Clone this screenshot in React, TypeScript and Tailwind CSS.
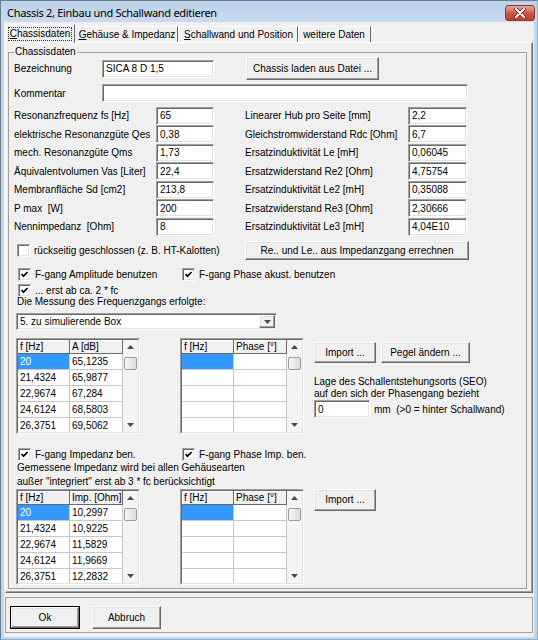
import React from "react";

const sunken =
  "bg-white border border-[#a0a0a0] border-r-white border-b-white shadow-[inset_1px_1px_0_#696969,inset_-1px_-1px_0_#e3e3e3]";
const raised =
  "bg-[#f0f0f0] border border-white border-r-[#696969] border-b-[#696969] shadow-[inset_-1px_-1px_0_#a0a0a0,inset_1px_1px_0_#e3e3e3]";

const leftParams: [string, string][] = [
  ["Resonanzfrequenz fs [Hz]", "65"],
  ["elektrische Resonanzgüte Qes", "0,38"],
  ["mech. Resonanzgüte Qms", "1,73"],
  ["Äquivalentvolumen Vas [Liter]", "22,4"],
  ["Membranfläche Sd [cm2]", "213,8"],
  ["P max  [W]", "200"],
  ["Nennimpedanz  [Ohm]", "8"],
];

const rightParams: [string, string][] = [
  ["Linearer Hub pro Seite [mm]", "2,2"],
  ["Gleichstromwiderstand Rdc [Ohm]", "6,7"],
  ["Ersatzinduktivität Le [mH]", "0,06045"],
  ["Ersatzwiderstand Re2 [Ohm]", "4,75754"],
  ["Ersatzinduktivität Le2 [mH]", "0,35088"],
  ["Ersatzwiderstand Re3 [Ohm]", "2,30666"],
  ["Ersatzinduktivität Le3 [mH]", "4,04E10"],
];

const amplitude: [string, string][] = [
  ["20", "65,1235"],
  ["21,4324", "65,9877"],
  ["22,9674", "67,284"],
  ["24,6124", "68,5803"],
  ["26,3751", "69,5062"],
];

const impedance: [string, string][] = [
  ["20", "10,2997"],
  ["21,4324", "10,9225"],
  ["22,9674", "11,5829"],
  ["24,6124", "11,9669"],
  ["26,3751", "12,2832"],
];

const emptyRows: [string, string][] = [
  ["", ""],
  ["", ""],
  ["", ""],
  ["", ""],
  ["", ""],
];

function Field({ value, w }: { value?: string; w: string }) {
  return (
    <div className={`${sunken} ${w} h-[18px] shrink-0 flex items-center pl-[3px] whitespace-nowrap overflow-hidden`}>
      {value}
    </div>
  );
}

function Btn({ children, w, h = "h-[21px]" }: { children: React.ReactNode; w: string; h?: string }) {
  return (
    <div className={`${raised} ${w} ${h} shrink-0 flex items-center justify-center whitespace-nowrap`}>
      {children}
    </div>
  );
}

function Check({ checked }: { checked?: boolean }) {
  return (
    <span className={`${sunken} w-[13px] h-[13px] shrink-0 flex items-center justify-center`}>
      {checked && (
        <svg width="9" height="9" viewBox="0 0 9 9">
          <path d="M1.5 4 L3.5 6.2 L7.6 2" fill="none" stroke="#000" strokeWidth="1.7" />
        </svg>
      )}
    </span>
  );
}

function Tri({ up }: { up?: boolean }) {
  return (
    <svg width="7" height="4" viewBox="0 0 7 4">
      <path d={up ? "M0 4 L3.5 0 L7 4 Z" : "M0 0 L7 0 L3.5 4 Z"} fill="#4a4a4a" />
    </svg>
  );
}

function Scrollbar() {
  return (
    <div className="w-[15px] h-full bg-[#f4f4f4] flex flex-col items-center">
      <div className="h-[14px] flex items-center justify-center">
        <Tri up />
      </div>
      <div className="w-[13px] h-[13px] mt-[3px] rounded-[2px] border border-[#9a9a9a] bg-gradient-to-r from-[#f6f6f6] to-[#dcdcdc]" />
      <div className="flex-1" />
      <div className="h-[14px] flex items-center justify-center">
        <Tri />
      </div>
    </div>
  );
}

function Grid({ cols, rows }: { cols: [string, string]; rows: [string, string][] }) {
  return (
    <div className="w-[124px] h-[96px] shrink-0 border border-[#a0a0a0] border-r-white border-b-white">
      <div className="w-full h-full border border-[#696969] border-r-[#e3e3e3] border-b-[#e3e3e3] bg-white flex overflow-hidden">
        <div className="w-[105px] flex flex-col">
          <div className="flex h-[14px] shrink-0">
            <div className="w-[52px] bg-[#f0f0f0] border-r border-b border-[#696969] shadow-[inset_1px_1px_0_#fff] pl-[2px] flex items-center">
              {cols[0]}
            </div>
            <div className="w-[53px] bg-[#f0f0f0] border-r border-b border-[#696969] shadow-[inset_1px_1px_0_#fff] pl-[2px] flex items-center">
              {cols[1]}
            </div>
          </div>
          {rows.map((r, i) => (
            <div key={i} className="flex h-[16px] shrink-0">
              <div
                className={`w-[52px] border-r border-b border-[#c8c8c8] pl-[2px] flex items-center ${
                  i === 0 ? "bg-[#3399ff] text-white" : ""
                }`}
              >
                {r[0]}
              </div>
              <div className="w-[53px] border-r border-b border-[#c8c8c8] pl-[2px] flex items-center">{r[1]}</div>
            </div>
          ))}
        </div>
        <Scrollbar />
      </div>
    </div>
  );
}

function CheckLabel({ checked, label, w }: { checked?: boolean; label: string; w?: string }) {
  return (
    <div className={`flex items-center gap-[4px] ${w ?? ""}`}>
      <Check checked={checked} />
      <span className="whitespace-nowrap">{label}</span>
    </div>
  );
}

export default function App() {
  return (
    <div className="w-[538px] h-[640px] bg-[#c4d6ec] border border-[#6b7d93] border-r-[#7fb6dc] border-b-[#7fb6dc] flex flex-col font-['Liberation_Sans',Arial,sans-serif] text-[10px] text-black overflow-hidden">
      {/* Title bar */}
      <div className="h-[21px] shrink-0 flex items-center justify-between pl-[6px] pr-[2px] bg-gradient-to-b from-[#bcd1ea] to-[#c9daee]">
        <span className="font-['Noto_Sans',sans-serif] text-[11px] tracking-[-0.3px] leading-none mt-[2px]">
          Chassis 2, Einbau und Schallwand editieren
        </span>
        <div className="w-[30px] h-[16px] mt-[3px] rounded-[3px] border border-[#8a3a30] bg-gradient-to-b from-[#e3a89d] via-[#cf5a48] to-[#c13d28] flex items-center justify-center">
          <svg width="12" height="10" viewBox="0 0 12 10">
            <path d="M2 1 L10 9 M10 1 L2 9" stroke="#5a2018" strokeWidth="3.4" strokeLinecap="round" />
            <path d="M2 1 L10 9 M10 1 L2 9" stroke="#fff" strokeWidth="2" strokeLinecap="round" />
          </svg>
        </div>
      </div>

      {/* Client area */}
      <div className="mx-[3px] mb-[2px] flex-1 bg-[#f0f0f0] flex flex-col">
        {/* Tabs */}
        <div className="flex items-start h-[18px] mt-[2px] pl-[1px] shrink-0">
          <div className="relative z-10 w-[70px] h-[19px] bg-[#f0f0f0] border-t border-l border-white border-r border-r-[#696969] flex items-center justify-center">
            <span className="border border-dotted border-[#333] px-[1px] leading-[12px]">
              <span className="underline">C</span>hassisdaten
            </span>
          </div>
          <div className="w-[103px] h-[16px] mt-[2px] border-t border-white border-r border-r-[#696969] flex items-center justify-center pl-[2px]">
            <span>
              <span className="underline">G</span>ehäuse &amp; Impedanz
            </span>
          </div>
          <div className="w-[120px] h-[16px] mt-[2px] border-t border-white border-r border-r-[#696969] flex items-center justify-center pl-[2px]">
            <span>
              <span className="underline">S</span>challwand und Position
            </span>
          </div>
          <div className="w-[73px] h-[16px] mt-[2px] border-t border-white border-r border-r-[#696969] flex items-center justify-center">
            weitere Daten
          </div>
        </div>

        {/* Tab panel */}
        <div className="ml-[1px] w-[528px] h-[551px] shrink-0 border border-white border-r-[#696969] border-b-[#696969] shadow-[inset_-1px_-1px_0_#a0a0a0] pt-[3px] pl-[2px]">
          <fieldset className="w-[519px] h-[543px] border border-[#a0a0a0]">
            <legend className="ml-[5px] px-[1px] leading-[12px]">Chassisdaten</legend>
            <div className="pl-[5px] flex flex-col">
              {/* Bezeichnung */}
              <div className="flex items-center h-[23px] -mt-[1px]">
                <span className="w-[88px]">Bezeichnung</span>
                <Field w="w-[112px]" value="SICA 8 D 1,5" />
                <div className="ml-[32px]">
                  <Btn w="w-[133px]" h="h-[23px]">
                    Chassis laden aus Datei ...
                  </Btn>
                </div>
              </div>

              {/* Kommentar */}
              <div className="flex items-center h-[18px] mt-[4px]">
                <span className="w-[88px]">Kommentar</span>
                <Field w="w-[366px]" />
              </div>

              {/* Parameter */}
              <div className="flex flex-col mt-[4.5px]">
                {leftParams.map((l, i) => (
                  <div key={i} className="flex items-center h-[18.5px]">
                    <span className="w-[142px] whitespace-pre">{l[0]}</span>
                    <Field w="w-[58px]" value={l[1]} />
                    <span className="w-[163px] ml-[31px] whitespace-pre">{rightParams[i][0]}</span>
                    <Field w="w-[59px]" value={rightParams[i][1]} />
                  </div>
                ))}
              </div>

              {/* Rückseitig / Re-Le */}
              <div className="flex items-center h-[19px] mt-[5px]">
                <div className="w-[231px] pl-[3px]">
                  <CheckLabel label="rückseitig geschlossen (z. B. HT-Kalotten)" />
                </div>
                <Btn w="w-[224px]" h="h-[19px]">
                  Re.. und Le.. aus Impedanzgang errechnen
                </Btn>
              </div>

              {/* Frequenzgang */}
              <div className="flex items-center h-[13px] mt-[8px] pl-[4px]">
                <CheckLabel checked label="F-gang Amplitude benutzen" w="w-[164px]" />
                <CheckLabel checked label="F-gang Phase akust. benutzen" />
              </div>
              <div className="flex items-center h-[13px] mt-[3px] pl-[4px]">
                <CheckLabel checked label="... erst ab ca. 2 * fc" />
              </div>
              <div className="h-[12px] leading-[12px] -mt-[1px] pl-[3px]">Die Messung des Frequenzgangs erfolgte:</div>

              <div className={`${sunken} ml-[2px] mt-[5px] w-[261px] h-[17px] flex items-center pl-[3px]`}>
                <span className="flex-1">5. zu simulierende Box</span>
                <div className={`${raised} w-[16px] h-[13px] mr-[1px] flex items-center justify-center`}>
                  <Tri />
                </div>
              </div>

              {/* Tabellen Amplitude/Phase */}
              <div className="flex mt-[8px] ml-[2px]">
                <Grid cols={["f [Hz]", "A [dB]"]} rows={amplitude} />
                <div className="ml-[40px]">
                  <Grid cols={["f [Hz]", "Phase [°]"]} rows={emptyRows} />
                </div>
                <div className="ml-[10px] flex flex-col">
                  <div className="flex gap-[5px] mt-[4px]">
                    <Btn w="w-[62px]">Import ...</Btn>
                    <Btn w="w-[89px]">Pegel ändern ...</Btn>
                  </div>
                  <div className="mt-[13px] leading-[12px]">
                    Lage des Schallentstehungsorts (SEO)
                    <br />
                    auf den sich der Phasengang bezieht
                  </div>
                  <div className="flex items-center">
                    <Field w="w-[56px]" value="0" />
                    <span className="ml-[4px] whitespace-pre">mm  (&gt;0 = hinter Schallwand)</span>
                  </div>
                </div>
              </div>

              {/* Impedanz */}
              <div className="flex items-center h-[13px] mt-[13.5px] pl-[4px]">
                <CheckLabel checked label="F-gang Impedanz ben." w="w-[164px]" />
                <CheckLabel checked label="F-gang Phase Imp. ben." />
              </div>
              <div className="leading-[14px] pl-[3px]">
                Gemessene Impedanz wird bei allen Gehäusearten
                <br />
                außer "integriert" erst ab 3 * fc berücksichtigt
              </div>
              <div className="flex ml-[2px]">
                <Grid cols={["f [Hz]", "Imp. [Ohm]"]} rows={impedance} />
                <div className="ml-[40px]">
                  <Grid cols={["f [Hz]", "Phase [°]"]} rows={emptyRows} />
                </div>
                <div className="ml-[10px]">
                  <Btn w="w-[62px]" h="h-[22px]">
                    Import ...
                  </Btn>
                </div>
              </div>
            </div>
          </fieldset>
        </div>

        {/* Bottom buttons */}
        <div className="ml-[1px] mt-[4px] w-[528px] h-[36px] shrink-0 border border-[#a0a0a0] flex items-start gap-[12px] pt-[8px] pl-[4px]">
          <div className="border border-black">
            <Btn w="w-[68px]" h="h-[21px]">
              Ok
            </Btn>
          </div>
          <Btn w="w-[69px]" h="h-[23px]">
            Abbruch
          </Btn>
        </div>
      </div>
    </div>
  );
}
